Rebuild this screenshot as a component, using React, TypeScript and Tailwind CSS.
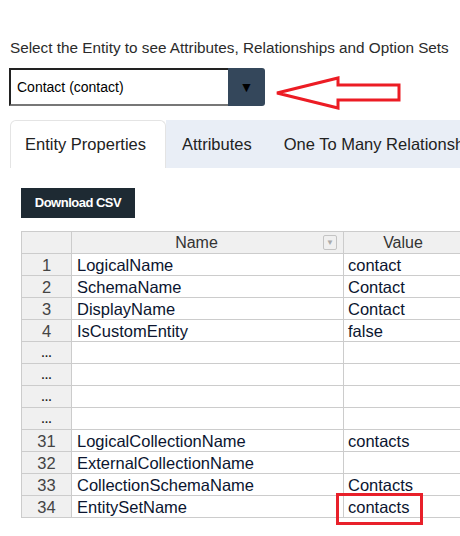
import React from "react";

const rows: [string, string, string][] = [
  ["1", "LogicalName", "contact"],
  ["2", "SchemaName", "Contact"],
  ["3", "DisplayName", "Contact"],
  ["4", "IsCustomEntity", "false"],
  ["…", "", ""],
  ["…", "", ""],
  ["…", "", ""],
  ["…", "", ""],
  ["31", "LogicalCollectionName", "contacts"],
  ["32", "ExternalCollectionName", ""],
  ["33", "CollectionSchemaName", "Contacts"],
  ["34", "EntitySetName", "contacts"],
];

export default function App() {
  return (
    <div className="relative w-[460px] h-[536px] overflow-hidden bg-white" style={{ fontFamily: '"Liberation Sans", Arial, sans-serif' }}>
      {/* Header */}
      <div className="pt-[39px] pl-[10px] text-[15.3px] text-[#2b2b2b] whitespace-nowrap leading-[18px]">
        Select the Entity to see Attributes, Relationships and Option Sets
      </div>

      {/* Entity select */}
      <div className="ml-[9px] mt-[11px] flex w-[256px] h-[38px]">
        <div className="flex-1 flex items-center pl-[6px] border-t-2 border-l-2 border-b-2 border-t-[#222] border-l-[#222] border-b-[#777] text-[14px] text-black">
          Contact (contact)
        </div>
        <div className="w-[37px] bg-[#34475b] rounded-r-[3px] flex items-center justify-center text-black text-[14px]">
          ▼
        </div>
      </div>

      {/* Tabs */}
      <div className="mt-[14px] ml-[10px] flex h-[48px] text-[16.5px] text-[#222] overflow-hidden">
        <div className="w-[156px] shrink-0 rounded-t-[6px] border-t border-l border-r border-[#e4e4e4] bg-white flex items-center pl-[14px] whitespace-nowrap">
          Entity Properties
        </div>
        <div className="flex-1 min-w-0 bg-[#e9eef6] flex items-center whitespace-nowrap overflow-hidden">
          <span className="ml-[16px]">Attributes</span>
          <span className="ml-[32px]">One To Many Relationships</span>
        </div>
      </div>

      {/* Download button */}
      <div className="mt-[20px] ml-[21px]">
        <button className="w-[114px] h-[30px] bg-[#1e2a33] text-white text-[13px] font-bold tracking-[-0.5px]">
          Download CSV
        </button>
      </div>

      {/* Table */}
      <div className="mt-[13px] ml-[21px]">
        <table className="table-fixed border-collapse text-[16.5px] w-[441px]">
          <colgroup>
            <col className="w-[50px]" />
            <col className="w-[272px]" />
            <col className="w-[119px]" />
          </colgroup>
          <thead>
            <tr className="h-[22px] bg-[#f0f0f0] text-[#333] text-[16px] leading-[20px]">
              <th className="border border-[#cccccc] font-normal"></th>
              <th className="border border-[#cccccc] font-normal relative">
                <span className="pr-[22px]">Name</span>
                <span className="absolute right-[6px] top-[3px] w-[14px] h-[15px] border border-[#c4c4c4] rounded-[2px] flex items-center justify-center text-[8px] text-[#aaa]">▼</span>
              </th>
              <th className="border border-[#cccccc] font-normal">Value</th>
            </tr>
          </thead>
          <tbody>
            {rows.map((r, i) => (
              <tr key={i} className="h-[22px] leading-[20px]">
                <td className={`border border-[#cccccc] bg-[#f0f0f0] text-center ${r[0] === "…" ? "text-[11px] text-[#222] font-bold" : "text-[#444]"}`}>{r[0]}</td>
                <td className="border border-[#cccccc] pl-[5px] text-[#0b1530] whitespace-nowrap overflow-hidden">{r[1]}</td>
                <td className="border border-[#cccccc] pl-[4px] text-[#0b1530] whitespace-nowrap overflow-hidden">{r[2]}</td>
              </tr>
            ))}
          </tbody>
        </table>
      </div>

      {/* Annotation arrow */}
      <svg className="absolute left-[270px] top-[72px]" width="140" height="42" viewBox="0 0 140 42">
        <polygon points="7,21 68,6 68,13 129,13 129,28 68,28 68,36" fill="none" stroke="#ec1c24" strokeWidth="3" strokeLinejoin="miter" />
      </svg>

      {/* Annotation box */}
      <div className="absolute left-[336px] top-[493px] w-[87px] h-[32px] border-[3px] border-[#e8202a]"></div>
    </div>
  );
}
